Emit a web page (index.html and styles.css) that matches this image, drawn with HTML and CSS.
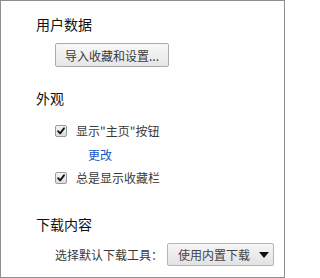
FILE: index.html
```html
<!DOCTYPE html>
<html>
<head>
<meta charset="utf-8">
<link rel="stylesheet" href="styles.css">
</head>
<body>
<div class="frame">
  <section class="group">
    <h3 class="heading">用户数据</h3>
    <div class="content">
      <button class="btn">导入收藏和设置...</button>
    </div>
  </section>
  <section class="group">
    <h3 class="heading">外观</h3>
    <div class="content">
      <label class="check-row"><span class="box"><svg viewBox="0 0 12 12" width="12" height="12"><path d="M2.5 6.2 L5 8.8 L9.6 2.8" fill="none" stroke="#111" stroke-width="2.2" stroke-linecap="round" stroke-linejoin="round"/></svg></span><span>显示"主页"按钮</span></label>
      <a class="link">更改</a>
      <label class="check-row"><span class="box"><svg viewBox="0 0 12 12" width="12" height="12"><path d="M2.5 6.2 L5 8.8 L9.6 2.8" fill="none" stroke="#111" stroke-width="2.2" stroke-linecap="round" stroke-linejoin="round"/></svg></span><span>总是显示收藏栏</span></label>
    </div>
  </section>
  <section class="group downloads">
    <h3 class="heading">下载内容</h3>
    <div class="content select-row">
      <span>选择默认下载工具：</span>
      <span class="select"><span>使用内置下载</span><svg viewBox="0 0 10 6" width="10" height="6"><path d="M0 0 H10 L5 6 Z" fill="#111"/></svg></span>
    </div>
  </section>
</div>
</body>
</html>
```
FILE: styles.css
```css
html, body {
  margin: 0;
  padding: 0;
  background: #fff;
}
body {
  font-family: "Noto Sans CJK SC", "Noto Sans", sans-serif;
  color: #3a3a3a;
}
.frame {
  box-sizing: border-box;
  width: 285px;
  height: 278px;
  border: 1px solid #8f8f8f;
  padding-top: 13px;
  overflow: hidden;
}
.heading {
  margin: 0 0 0 35px;
  font-size: 14px;
  line-height: 20px;
  font-weight: normal;
  color: #111;
}
.group + .group {
  margin-top: 21px;
}
.group.downloads {
  margin-top: 27px;
}
.content {
  padding-left: 54px;
  font-size: 12px;
  line-height: 18px;
}
.btn {
  margin-top: 9px;
  width: 114px;
  height: 24px;
  padding: 0;
  font-family: inherit;
  font-size: 12px;
  color: #3a3a3a;
  border: 1px solid #ababab;
  border-radius: 2px;
  background: linear-gradient(#f8f8f8, #e6e6e6);
  display: block;
}
.check-row {
  display: flex;
  align-items: center;
  gap: 9px;
  height: 18px;
  margin-top: 14px;
}
.check-row + .link + .check-row {
  margin-top: 5px;
}
.box {
  box-sizing: border-box;
  width: 12px;
  height: 12px;
  border: 1px solid #9a9a9a;
  border-radius: 2px;
  background: linear-gradient(#f4f4f4, #dcdcdc);
  display: flex;
  align-items: center;
  justify-content: center;
}
.box svg {
  display: block;
}
.link {
  display: block;
  margin: 6px 0 0 33px;
  color: #1a56c8;
  line-height: 18px;
}
.select-row {
  display: flex;
  align-items: center;
  gap: 4px;
  margin-top: 9px;
  color: #3a3a3a;
}
.select {
  box-sizing: border-box;
  width: 107px;
  height: 23px;
  border: 1px solid #b5b5b5;
  border-radius: 2px;
  background: linear-gradient(#f6f6f6, #e2e2e2);
  display: flex;
  align-items: center;
  justify-content: space-between;
  padding: 0 4px 0 10px;
  color: #444;
}
```
